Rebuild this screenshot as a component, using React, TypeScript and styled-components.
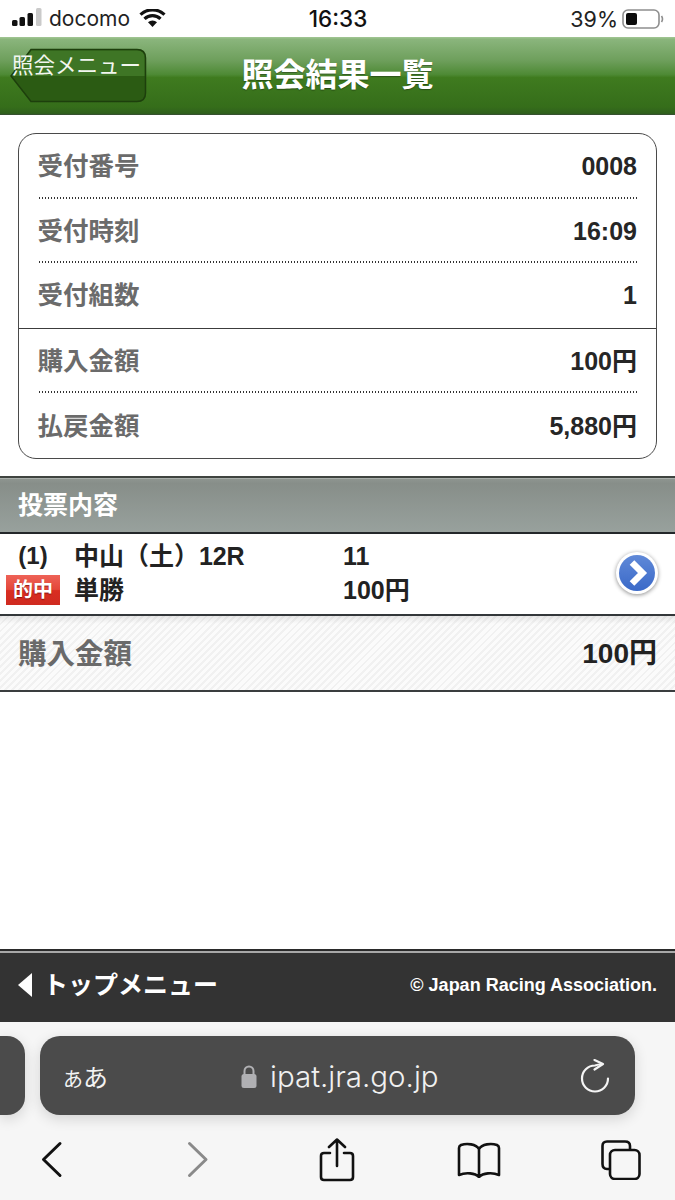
import React from 'react';
import styled, { createGlobalStyle } from 'styled-components';

const SANS = `"Liberation Sans", "Noto Sans CJK JP", sans-serif`;
const IOS = `Inter, "Noto Sans CJK JP", sans-serif`;

const GlobalStyle = createGlobalStyle`
  html, body { margin: 0; padding: 0; background: #fff; }
  body { font-family: ${SANS}; width: 675px; height: 1200px; overflow: hidden; }
  * { box-sizing: border-box; }
`;

const summary = [
  { label: '受付番号', value: '0008', line: 'dotted' },
  { label: '受付時刻', value: '16:09', line: 'dotted' },
  { label: '受付組数', value: '1', line: 'solid' },
  { label: '購入金額', value: '100円', line: 'dotted' },
  { label: '払戻金額', value: '5,880円', line: 'none' },
] as const;

export default function App() {
  return (
    <Page>
      <GlobalStyle />
      <StatusBar>
        <StatusLeft>
          <SignalIcon />
          <Carrier>docomo</Carrier>
          <WifiIcon />
        </StatusLeft>
        <Clock>16:33</Clock>
        <StatusRight>
          <Percent>39%</Percent>
          <BatteryIcon />
        </StatusRight>
      </StatusBar>

      <Header>
        <BackButton>
          <BackShape viewBox="0 0 137 55">
            <path
              d="M21 1.5H127Q135.500 1.500 135.500 10V45Q135.500 53.500 127 53.500H21L1 28Z"
              fill="#2b5b13"
              stroke="#1d3f0c"
              strokeWidth="1.5"
            />
            <path d="M2 28L21.500 2.500H127Q134.500 2.500 134.500 10V28Z" fill="#4f8a35" opacity="0.55" />
          </BackShape>
          <BackLabel>照会メニュー</BackLabel>
        </BackButton>
        <Title>照会結果一覧</Title>
      </Header>

      <Main>
        <SummaryCard>
          {summary.map((row) => (
            <SummaryRow key={row.label} $line={row.line}>
              <SummaryLabel>{row.label}</SummaryLabel>
              <SummaryValue>{row.value}</SummaryValue>
            </SummaryRow>
          ))}
        </SummaryCard>

        <SectionBar>投票内容</SectionBar>

        <BetRow>
          <BetIndex>
            <span>(1)</span>
            <HitBadge>的中</HitBadge>
          </BetIndex>
          <BetKind>
            <span>
              中山（土）<RaceNo>12R</RaceNo>
            </span>
            <span>単勝</span>
          </BetKind>
          <BetPick>
            <span>11</span>
            <span>100円</span>
          </BetPick>
          <DetailIcon />
        </BetRow>

        <TotalRow>
          <TotalLabel>購入金額</TotalLabel>
          <TotalValue>100円</TotalValue>
        </TotalRow>
      </Main>

      <Footer>
        <TopLink>
          <TopArrow viewBox="0 0 14 24">
            <path d="M14 0V24L0 12Z" fill="#fff" />
          </TopArrow>
          トップメニュー
        </TopLink>
        <Copyright>© Japan Racing Association.</Copyright>
      </Footer>

      <Browser>
        <TabRow>
          <TabPeek />
          <AddressBar>
            <AaLabel>
              <small>あ</small>あ
            </AaLabel>
            <UrlGroup>
              <LockIcon />
              <UrlText>ipat.jra.go.jp</UrlText>
            </UrlGroup>
            <ReloadIcon />
          </AddressBar>
        </TabRow>
        <Toolbar>
          <ChevronIcon d="M20 3.500L3.500 19.500L20 35.500" stroke="#111" />
          <ChevronIcon d="M3.500 3.500L20 19.500L3.500 35.500" stroke="#8a8a8a" />
          <ShareIcon />
          <BookIcon />
          <TabsIcon />
        </Toolbar>
      </Browser>
    </Page>
  );
}

const SignalIcon = () => (
  <SignalSvg viewBox="0 0 30 18">
    <rect x="0" y="12" width="5.500" height="6" rx="1.500" fill="#111" />
    <rect x="7.500" y="9" width="5.500" height="9" rx="1.500" fill="#111" />
    <rect x="15.500" y="5" width="5.500" height="13" rx="1.500" fill="#111" />
    <rect x="24" y="0" width="5.500" height="18" rx="1.500" fill="#cacaca" />
  </SignalSvg>
);

const WifiIcon = () => (
  <WifiSvg viewBox="0 0 27 18">
    <path d="M13.500 18L9 13.300A6.500 6.500 0 0 1 18 13.300Z" fill="#111" />
    <path d="M5.500 9.800A11.500 11.500 0 0 1 21.500 9.800" fill="none" stroke="#111" strokeWidth="3.200" />
    <path d="M1.500 5.600A17.500 17.500 0 0 1 25.500 5.600" fill="none" stroke="#111" strokeWidth="3.200" />
  </WifiSvg>
);

const BatteryIcon = () => (
  <svg width="42" height="20" viewBox="0 0 42 20">
    <rect x="1" y="1" width="36" height="18" rx="5" fill="none" stroke="#8e8e8e" strokeWidth="1.6" />
    <rect x="4" y="4" width="11" height="12" rx="2" fill="#0c0c0c" />
    <path d="M39.500 7Q41.500 10 39.500 13" fill="none" stroke="#8e8e8e" strokeWidth="1.6" />
  </svg>
);

const DetailIcon = () => (
  <DetailSvg viewBox="0 0 44 44">
    <defs>
      <linearGradient id="detailBlue" x1="0" y1="0" x2="0" y2="1">
        <stop offset="0" stopColor="#6089d8" />
        <stop offset="1" stopColor="#3a69c8" />
      </linearGradient>
    </defs>
    <circle cx="22" cy="22" r="21" fill="#fff" />
    <circle cx="22" cy="22" r="18" fill="url(#detailBlue)" />
    <path d="M17 11.500L27.500 22L17 32.500" fill="none" stroke="#fff" strokeWidth="6.500" />
  </DetailSvg>
);

const LockIcon = () => (
  <svg width="16" height="24" viewBox="0 0 16 24">
    <path d="M3.500 11V7a4.500 4.500 0 0 1 9 0V11" fill="none" stroke="#b0b0b3" strokeWidth="2" />
    <rect x="0.500" y="10" width="15" height="14" rx="2.500" fill="#b0b0b3" />
  </svg>
);

const ReloadIcon = () => (
  <ReloadSvg viewBox="0 0 30 34" fill="none" stroke="#f4f4f4" strokeWidth="2.200" strokeLinecap="round" strokeLinejoin="round">
    <path d="M28 19.500A13 13 0 1 1 15 6.500Q18 5.500 22 5" />
    <path d="M14.500 1L23 5L14.500 10.500" />
  </ReloadSvg>
);

const ChevronIcon = ({ d, stroke }: { d: string; stroke: string }) => (
  <svg width="25" height="39" viewBox="0 0 25 39">
    <path d={d} fill="none" stroke={stroke} strokeWidth="3" strokeLinecap="round" strokeLinejoin="round" />
  </svg>
);

const ShareIcon = () => (
  <svg width="36" height="44" viewBox="0 0 36 44" fill="none" stroke="#111" strokeWidth="2.600" strokeLinecap="round" strokeLinejoin="round">
    <path d="M11 15H5Q2 15 2 18V39Q2 42 5 42H31Q34 42 34 39V18Q34 15 31 15H25" />
    <path d="M18 28V2M10 9L18 1.500L26 9" />
  </svg>
);

const BookIcon = () => (
  <svg width="44" height="36" viewBox="0 0 44 36" fill="none" stroke="#111" strokeWidth="2.600" strokeLinejoin="round" strokeLinecap="round">
    <path d="M22 7C19 2 10 1 4 3Q2 4 2 6V33C9 30 18 31 22 35C26 31 35 30 42 33V6Q42 4 40 3C34 1 25 2 22 7V35" />
  </svg>
);

const TabsIcon = () => (
  <svg width="40" height="40" viewBox="0 0 40 40" fill="none" stroke="#111" strokeWidth="2.600">
    <path d="M8 29H6Q1.500 29 1.500 24V6Q1.500 1.500 6 1.500H24Q29 1.500 29 6V9" />
    <rect x="9" y="10" width="29.500" height="29" rx="5" />
  </svg>
);

const Page = styled.div`
  width: 675px;
  height: 1200px;
  display: flex;
  flex-direction: column;
  background: #fff;
`;

const StatusBar = styled.div`
  height: 37px;
  display: grid;
  grid-template-columns: 1fr auto 1fr;
  align-items: center;
  padding: 0 11px 0 12px;
  color: #111;
  font-family: ${IOS};
  font-size: 21px;
`;

const StatusLeft = styled.div`
  display: flex;
  align-items: center;
  gap: 7px;
`;

const SignalSvg = styled.svg`
  display: block;
  width: 30px;
  height: 18px;
  margin-top: -3px;
`;

const WifiSvg = styled.svg`
  display: block;
  width: 27px;
  height: 18px;
  margin-top: -1px;
`;

const Carrier = styled.span`
  margin-right: 2px;
  color: #222;
`;

const Clock = styled.span`
  font-size: 22.5px;
  font-weight: 500;
`;

const StatusRight = styled.div`
  display: flex;
  align-items: center;
  justify-content: flex-end;
  gap: 4px;
`;

const Percent = styled.span`
  color: #222;
  font-size: 21.5px;
`;

const Header = styled.header`
  height: 78px;
  display: grid;
  grid-template-columns: 1fr auto 1fr;
  align-items: center;
  padding: 0 10px;
  background: linear-gradient(
    #a3c795 0,
    #8ab57c 3%,
    #6e9f5c 30%,
    #4e8a35 48%,
    #3f7b1f 52%,
    #356d1a 90%,
    #2f5f1c 98%,
    #3a4a38 100%
  );
`;

const BackButton = styled.div`
  position: relative;
  width: 137px;
  height: 55px;
  margin-top: -1px;
`;

const BackShape = styled.svg`
  display: block;
  width: 137px;
  height: 55px;
`;

const BackLabel = styled.span`
  position: absolute;
  left: 2px;
  top: 4px;
  white-space: nowrap;
  color: #f2f6ef;
  font-size: 21.5px;
  line-height: 28px;
`;

const Title = styled.h1`
  margin: 0 0 3px;
  color: #fff;
  font-size: 32px;
  line-height: 40px;
  font-weight: 700;
  text-shadow: 0 1px 1px rgba(0, 0, 0, 0.35);
`;

const Main = styled.main`
  flex: 1;
  padding-top: 18px;
`;

const SummaryCard = styled.section`
  width: 639px;
  height: 326px;
  margin-left: 18px;
  border: 1.5px solid #4a4a4a;
  border-radius: 18px;
  display: flex;
  flex-direction: column;
`;

const lineStyles = {
  dotted: `
    margin: 0 19px 0 18.5px;
    background: radial-gradient(circle, #333 0.8px, transparent 1px) bottom left / 3px 2px repeat-x;
  `,
  solid: `
    margin: 0;
    padding: 0 19px 0 18.5px;
    border-bottom: 1.5px solid #3c3c3c;
  `,
  none: `
    margin: 0 19px 0 18.5px;
  `,
};

const SummaryRow = styled.div<{ $line: keyof typeof lineStyles }>`
  flex: 1;
  display: flex;
  align-items: center;
  justify-content: space-between;
  ${(p) => lineStyles[p.$line]}
`;

const SummaryLabel = styled.span`
  color: #6b6b6b;
  font-size: 25.5px;
  line-height: 30px;
  font-weight: 700;
`;

const SummaryValue = styled.span`
  color: #262626;
  font-size: 25px;
  line-height: 30px;
  font-weight: 700;
`;

const SectionBar = styled.h2`
  height: 58px;
  margin: 17px 0 0;
  padding: 0 0 0 18px;
  display: flex;
  align-items: center;
  color: #fff;
  font-size: 25px;
  line-height: 30px;
  font-weight: 700;
  border-top: 2px solid #3f4440;
  border-bottom: 2px solid #23272a;
  background: linear-gradient(#8f9691 0, #878e89 10%, #98a19d 100%);
  box-shadow: inset 0 1px 0 #a9afab;
`;

const BetRow = styled.div`
  height: 80px;
  display: grid;
  grid-template-columns: 54px 255px 1fr auto;
  column-gap: 14px;
  align-items: center;
  padding: 0 16px 2px 6px;
  color: #222;
  font-size: 25px;
  font-weight: 700;
`;

const BetIndex = styled.div`
  display: flex;
  flex-direction: column;
  align-items: center;
  gap: 5px;
  font-size: 24px;
  line-height: 28px;
`;

const HitBadge = styled.span`
  width: 54px;
  height: 30px;
  display: flex;
  align-items: center;
  justify-content: center;
  color: #fff;
  font-size: 20px;
  line-height: 1;
  text-shadow: 0 1px 1px rgba(90, 0, 0, 0.6);
  background: linear-gradient(#ee6257 0, #e4473a 48%, #d92d21 52%, #cf2a20 100%);
`;

const BetKind = styled.div`
  display: flex;
  flex-direction: column;
  gap: 5px;
  line-height: 29px;
`;

const RaceNo = styled.span`
  letter-spacing: -0.2px;
`;

const BetPick = styled(BetKind)``;

const DetailSvg = styled.svg`
  display: block;
  width: 44px;
  height: 44px;
  filter: drop-shadow(0 1px 2px rgba(0, 0, 0, 0.45));
`;

const TotalRow = styled.div`
  height: 78px;
  display: flex;
  align-items: center;
  justify-content: space-between;
  padding: 1px 18px 0;
  border-top: 2px solid #33373a;
  border-bottom: 2px solid #3a3d3f;
  background:
    linear-gradient(rgba(0, 0, 0, 0.08) 0, transparent 8px),
    repeating-linear-gradient(135deg, #f1f1f1 0 2px, #fbfbfb 2px 5px);
`;

const TotalLabel = styled.span`
  color: #6a6a6a;
  font-size: 28.5px;
  line-height: 34px;
  font-weight: 700;
`;

const TotalValue = styled.span`
  color: #222;
  font-size: 28px;
  line-height: 34px;
  font-weight: 700;
`;

const Footer = styled.footer`
  height: 73px;
  display: flex;
  align-items: center;
  justify-content: space-between;
  padding: 0 18px 3px;
  color: #fff;
  font-weight: 700;
  border-top: 2px solid #2a2a2a;
  background: #333;
  box-shadow: inset 0 2px 0 #a8a8a8;
`;

const TopLink = styled.div`
  display: flex;
  align-items: center;
  gap: 11px;
  font-size: 25px;
  line-height: 30px;
`;

const TopArrow = styled.svg`
  display: block;
  width: 14px;
  height: 24px;
`;

const Copyright = styled.span`
  font-size: 18px;
  line-height: 24px;
`;

const Browser = styled.div`
  height: 178px;
  background: #f6f6f6;
  display: flex;
  flex-direction: column;
`;

const TabRow = styled.div`
  display: flex;
  gap: 15px;
  margin-top: 14px;
  height: 79px;
`;

const TabPeek = styled.div`
  width: 25px;
  background: #4b4b4b;
  border-radius: 0 18px 18px 0;
  box-shadow: 0 4px 14px rgba(0, 0, 0, 0.14);
`;

const AddressBar = styled.div`
  position: relative;
  width: 595px;
  display: flex;
  align-items: center;
  justify-content: space-between;
  padding: 0 25px 0 23px;
  background: #4b4b4b;
  border-radius: 20px;
  color: #f2f2f2;
  box-shadow: 0 4px 14px rgba(0, 0, 0, 0.14);
`;

const AaLabel = styled.span`
  font-family: "Noto Sans CJK JP", sans-serif;
  font-size: 25px;
  small {
    font-size: 20px;
  }
`;

const UrlGroup = styled.div`
  position: absolute;
  left: 201px;
  display: flex;
  align-items: center;
  gap: 13px;
`;

const UrlText = styled.span`
  font-family: ${IOS};
  font-size: 29.5px;
  font-weight: 300;
  color: #f0f0f0;
`;

const ReloadSvg = styled.svg`
  display: block;
  width: 30px;
  height: 34px;
`;

const Toolbar = styled.nav`
  flex: 1;
  display: grid;
  grid-template-columns: 146px 133px 138px 144px 40px;
  align-items: center;
  padding: 4px 0 0 40px;
  svg {
    display: block;
  }
`;
